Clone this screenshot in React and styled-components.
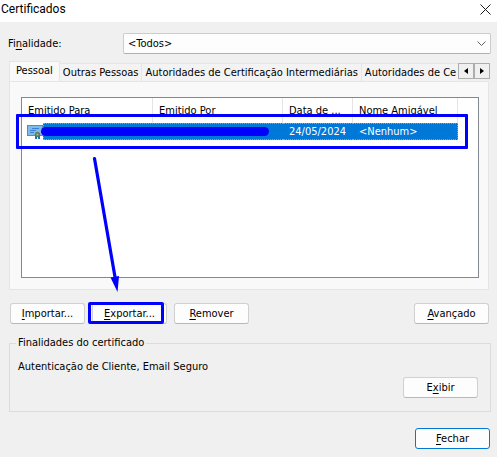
import styled, { createGlobalStyle } from "styled-components";

const TABS = [
  "Pessoal",
  "Outras Pessoas",
  "Autoridades de Certificação Intermediárias",
  "Autoridades de Ce",
];

const COLUMNS = [
  { label: "Emitido Para", width: 131 },
  { label: "Emitido Por", width: 130 },
  { label: "Data de ...", width: 70 },
  { label: "Nome Amigável", width: 105 },
];

const CertificateIcon = () => (
  <svg width="16" height="17" viewBox="0 0 16 17" aria-hidden="true">
    <rect x="0.5" y="2.5" width="15" height="10" fill="#7fbbe6" stroke="#4f8fb8" />
    <path d="M5 5.5h7M3 7.5h6M3 9.5h4" stroke="#3d7fd0" fill="none" />
    <path d="M8 12v4h2v-2h1v2h2v-4z" fill="#1473d2" />
    <circle cx="10.5" cy="11.5" r="2.2" fill="#6e8f70" stroke="#55755f" />
    <circle cx="10.5" cy="11.5" r="0.8" fill="#a9b97c" />
  </svg>
);

const Mnemonic = ({ text, at = 0 }) => (
  <span>
    {text.slice(0, at)}
    <u>{text[at]}</u>
    {text.slice(at + 1)}
  </span>
);

const App = () => {
  return (
    <Dialog>
      <GlobalStyle />
      <TitleBar>
        <Title>Certificados</Title>
        <CloseButton type="button" aria-label="Fechar janela">
          <svg width="11" height="11" viewBox="0 0 11 11">
            <path d="M0.5 0.5l10 10M10.5 0.5l-10 10" stroke="#1a1a1a" />
          </svg>
        </CloseButton>
      </TitleBar>

      <Purpose>
        <label htmlFor="purpose">
          <Mnemonic text="Finalidade:" at={2} />
        </label>
        <SelectWrap>
          <Select id="purpose" defaultValue="all">
            <option value="all">&lt;Todos&gt;</option>
          </Select>
          <Chevron width="9" height="5" viewBox="0 0 9 5" aria-hidden="true">
            <path d="M0.5 0.5l4 4 4-4" stroke="#606060" fill="none" />
          </Chevron>
        </SelectWrap>
      </Purpose>

      <Main>
        <TabBar>
          <TabList role="tablist">
            {TABS.map((tab, i) => (
              <Tab key={tab} type="button" role="tab" aria-selected={i === 0} $active={i === 0}>
                {tab}
              </Tab>
            ))}
          </TabList>
          <Spinner>
            <SpinButton type="button" aria-label="Guias anteriores">
              <svg width="4" height="6" viewBox="0 0 4 6">
                <path d="M4 0v6L0 3z" />
              </svg>
            </SpinButton>
            <SpinButton type="button" aria-label="Próximas guias">
              <svg width="4" height="6" viewBox="0 0 4 6">
                <path d="M0 0v6l4-3z" />
              </svg>
            </SpinButton>
          </Spinner>
        </TabBar>

        <Panel role="tabpanel">
          <ListView>
            <Table>
              <colgroup>
                {COLUMNS.map((column) => (
                  <Col key={column.label} $width={column.width} />
                ))}
              </colgroup>
              <thead>
                <tr>
                  {COLUMNS.map((column) => (
                    <HeadCell key={column.label}>{column.label}</HeadCell>
                  ))}
                </tr>
              </thead>
              <tbody>
                <tr>
                  <IconCell colSpan={2}>
                    <NameCell>
                      <CertificateIcon />
                      <Selection />
                    </NameCell>
                  </IconCell>
                  <Cell>24/05/2024</Cell>
                  <Cell $last>&lt;Nenhum&gt;</Cell>
                </tr>
              </tbody>
            </Table>
            <Redaction />
            <RowMark />
          </ListView>
          <Arrow width="32" height="138" viewBox="0 0 32 138" aria-hidden="true">
            <path d="M3.5 2.5L24 121" stroke="#0000ff" strokeWidth="3.2" strokeLinecap="round" />
            <path d="M19.5 121.500l8.500-1.500-1.500 16z" fill="#0000ff" />
          </Arrow>
        </Panel>

        <Actions>
          <Button type="button">
            <Mnemonic text="Importar..." />
          </Button>
          <Marked>
            <Button type="button">
              <Mnemonic text="Exportar..." />
            </Button>
            <ButtonMark />
          </Marked>
          <Button type="button">
            <Mnemonic text="Remover" />
          </Button>
          <Spacer />
          <Button type="button">
            <Mnemonic text="Avançado" />
          </Button>
        </Actions>
      </Main>

      <Group>
        <legend>Finalidades do certificado</legend>
        <Purposes>Autenticação de Cliente, Email Seguro</Purposes>
        <GroupActions>
          <Button type="button">
            <Mnemonic text="Exibir" at={1} />
          </Button>
        </GroupActions>
      </Group>

      <Footer>
        <Button type="button" $primary>
          <Mnemonic text="Fechar" />
        </Button>
      </Footer>
    </Dialog>
  );
};

const GlobalStyle = createGlobalStyle`
  * {
    box-sizing: border-box;
  }

  body {
    margin: 0;
    background-color: #f0f0f0;
  }

  button,
  select {
    margin: 0;
    font: inherit;
    color: inherit;
  }

  u {
    text-underline-offset: 2px;
  }
`;

const Dialog = styled.main`
  font-family: Tahoma, "DejaVu Sans Condensed", "Noto Sans", sans-serif;
  font-size: 11px;
  line-height: 14px;
  color: #000;
  background-color: #f0f0f0;
`;

const TitleBar = styled.header`
  display: flex;
  align-items: center;
  justify-content: space-between;
  height: 22px;
  padding: 0 6px 4px 1px;
  background-color: #fff;
`;

const Title = styled.h1`
  margin: 0;
  font-family: "Segoe UI", Roboto, sans-serif;
  font-size: 12px;
  font-weight: 400;
  line-height: 18px;
`;

const CloseButton = styled.button`
  display: flex;
  padding: 0;
  border: none;
  background: none;
`;

const Purpose = styled.div`
  display: grid;
  grid-template-columns: 115px 1fr;
  align-items: center;
  padding: 11px 6px 0 8px;
`;

const SelectWrap = styled.div`
  position: relative;
`;

const Select = styled.select`
  display: block;
  width: 100%;
  height: 21px;
  padding: 0 20px 0 4px;
  border: 1px solid #ccc;
  border-bottom-color: #b0b0b0;
  border-radius: 2px;
  background-color: #fdfdfd;
  appearance: none;
`;

const Chevron = styled.svg`
  position: absolute;
  top: 8px;
  right: 5px;
  pointer-events: none;
`;

const Main = styled.section`
  padding: 7px 8px 0 9px;
`;

const TabBar = styled.div`
  display: flex;
  align-items: flex-end;
  height: 20px;
  margin-right: -1px;
`;

const TabList = styled.div`
  display: flex;
  flex: 1;
  align-items: flex-end;
  min-width: 0;
  overflow: hidden;
`;

const Tab = styled.button`
  flex: none;
  height: ${(props) => (props.$active ? 20 : 18)}px;
  padding: ${(props) => (props.$active ? "0 6px 2px" : "0 3px")};
  border: 1px solid #e5e5e5;
  border-bottom: none;
  border-left-width: ${(props) => (props.$active ? 1 : 0)}px;
  background-color: ${(props) => (props.$active ? "#f9f9f9" : "#f3f3f3")};

  &:last-child {
    border-right: none;
  }
`;

const Spinner = styled.div`
  display: flex;
  align-self: center;
`;

const SpinButton = styled.button`
  display: flex;
  align-items: center;
  justify-content: center;
  width: 16px;
  height: 16px;
  padding: 0;
  border: 1px solid #adadad;
  background-color: #f0f0f0;
`;

const Panel = styled.div`
  position: relative;
  padding: 15px 9px 11px 11px;
  border: 1px solid #e5e5e5;
  background-color: #f9f9f9;
`;

const ListView = styled.div`
  position: relative;
  height: 181px;
  border: 1px solid #828790;
  background-color: #fff;
`;

const Table = styled.table`
  width: 436px;
  table-layout: fixed;
  border-collapse: separate;
  border-spacing: 0;
`;

const Col = styled.col`
  width: ${(props) => props.$width}px;
`;

const HeadCell = styled.th`
  height: 25px;
  padding: 0 0 0 6px;
  border-right: 1px solid #e5e5e5;
  font-weight: 400;
  text-align: left;
  white-space: nowrap;
`;

const Cell = styled.td`
  height: 17px;
  padding: 0 0 0 6px;
  border: 1px dotted #f58a28;
  border-width: 1px ${(props) => (props.$last ? 1 : 0)}px 1px 0;
  color: #fff;
  background-color: #0078d7;
`;

const IconCell = styled.td`
  height: 17px;
  padding: 0 0 0 5px;
`;

const NameCell = styled.div`
  display: flex;
`;

const Selection = styled.span`
  flex: 1;
  height: 17px;
  border: 1px dotted #f58a28;
  border-right: none;
  background-color: #0078d7;
`;

const Redaction = styled.span`
  position: absolute;
  top: 29px;
  left: 19px;
  width: 228px;
  height: 9px;
  border-radius: 5px;
  background-color: #0000ff;
`;

const RowMark = styled.span`
  position: absolute;
  top: 16px;
  left: -6px;
  width: 452px;
  height: 35px;
  border: 3px solid #0000ff;
  border-radius: 1px;
  pointer-events: none;
`;

const Arrow = styled.svg`
  position: absolute;
  top: 74px;
  left: 81px;
  z-index: 1;
  pointer-events: none;
`;

const Actions = styled.div`
  display: flex;
  gap: 7px;
  padding: 13px 0 0 1px;
`;

const Button = styled.button`
  width: 75px;
  height: 21px;
  padding: 0;
  border: 1px solid ${(props) => (props.$primary ? "#0078d4" : "#d0d0d0")};
  border-bottom-color: ${(props) => (props.$primary ? "#0078d4" : "#b8b8b8")};
  border-radius: 3px;
  background-color: #fdfdfd;
`;

const Marked = styled.div`
  position: relative;
  display: flex;
`;

const ButtonMark = styled.span`
  position: absolute;
  top: -1px;
  left: -4px;
  width: 76px;
  height: 22px;
  border: 3px solid #0000ff;
  border-radius: 2px;
  pointer-events: none;
`;

const Spacer = styled.div`
  flex: 1;
`;

const Group = styled.fieldset`
  margin: 12px 6px 0 9px;
  padding: 10px 12px 13px 6px;
  border: 1px solid #dcdcdc;

  legend {
    padding: 0 2px;
  }
`;

const Purposes = styled.p`
  margin: 0;
  padding-left: 2px;
`;

const GroupActions = styled.div`
  display: flex;
  justify-content: flex-end;
  padding-top: 3px;
`;

const Footer = styled.footer`
  display: flex;
  justify-content: flex-end;
  padding: 16px 7px 8px;
`;

export default App;
